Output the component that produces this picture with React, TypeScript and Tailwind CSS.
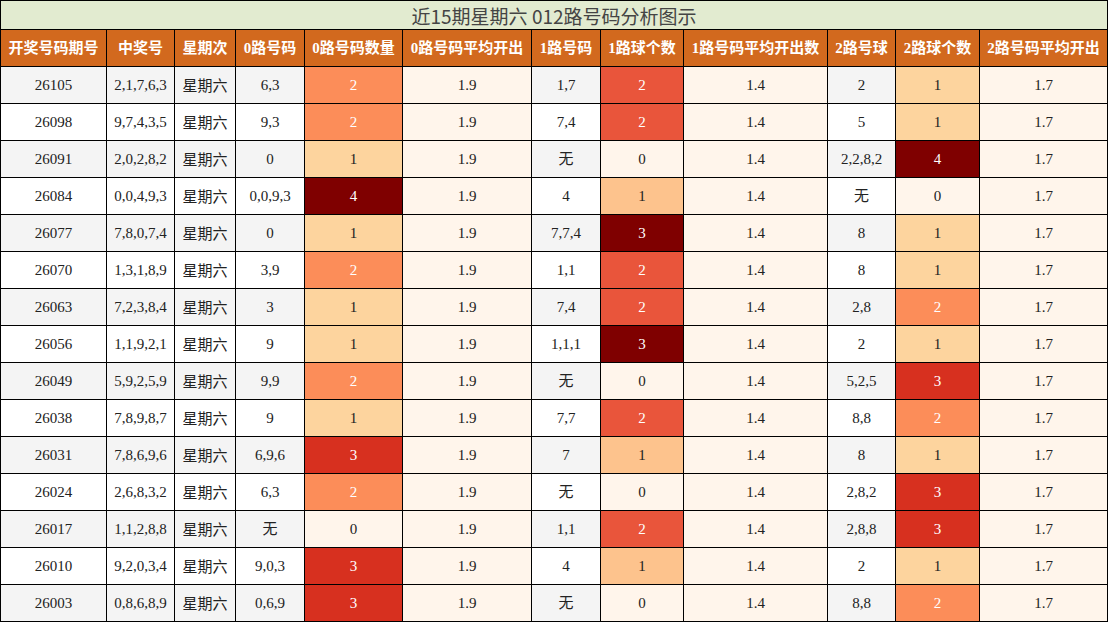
import React from 'react';

type Row = [string, string, string, number, string, number, string, number];

// 期号, 中奖号, 0路号码, 0路数量, 1路号码, 1路个数, 2路号球, 2路个数
const rows: Row[] = [
    ['26105', '2,1,7,6,3', '6,3', 2, '1,7', 2, '2', 1],
    ['26098', '9,7,4,3,5', '9,3', 2, '7,4', 2, '5', 1],
    ['26091', '2,0,2,8,2', '0', 1, '无', 0, '2,2,8,2', 4],
    ['26084', '0,0,4,9,3', '0,0,9,3', 4, '4', 1, '无', 0],
    ['26077', '7,8,0,7,4', '0', 1, '7,7,4', 3, '8', 1],
    ['26070', '1,3,1,8,9', '3,9', 2, '1,1', 2, '8', 1],
    ['26063', '7,2,3,8,4', '3', 1, '7,4', 2, '2,8', 2],
    ['26056', '1,1,9,2,1', '9', 1, '1,1,1', 3, '2', 1],
    ['26049', '5,9,2,5,9', '9,9', 2, '无', 0, '5,2,5', 3],
    ['26038', '7,8,9,8,7', '9', 1, '7,7', 2, '8,8', 2],
    ['26031', '7,8,6,9,6', '6,9,6', 3, '7', 1, '8', 1],
    ['26024', '2,6,8,3,2', '6,3', 2, '无', 0, '2,8,2', 3],
    ['26017', '1,1,2,8,8', '无', 0, '1,1', 2, '2,8,8', 3],
    ['26010', '9,2,0,3,4', '9,0,3', 3, '4', 1, '2', 1],
    ['26003', '0,8,6,8,9', '0,6,9', 3, '无', 0, '8,8', 2],
];

const headers = ['开奖号码期号', '中奖号', '星期次', '0路号码', '0路号码数量', '0路号码平均开出', '1路号码', '1路球个数', '1路号码平均开出数', '2路号球', '2路球个数', '2路号码平均开出'];
const widths = [106, 68, 61, 69, 98, 129, 69, 83, 144, 68, 84, 128];

// scale for columns whose max is 4
const scale4: Record<number, string> = {
    0: 'bg-[#fff5eb] text-[#222]',
    1: 'bg-[#fdd49e] text-[#222]',
    2: 'bg-[#fc8d59] text-white',
    3: 'bg-[#d7301f] text-white',
    4: 'bg-[#7f0000] text-white',
};
// 1路 column tops out at 3
const scale3: Record<number, string> = {
    0: 'bg-[#fff5eb] text-[#222]',
    1: 'bg-[#fdc38d] text-[#222]',
    2: 'bg-[#e9553b] text-white',
    3: 'bg-[#7f0000] text-white',
};

const cell = 'border border-black text-center p-0 text-[15px]';

export default function App() {
    return (
        <div className="w-[1108px] h-[622px] overflow-hidden bg-white" style={{ fontFamily: '"Liberation Serif", "Noto Sans CJK SC", serif' }}>
            <table className="table-fixed border-collapse w-[1108px] text-[#222]">
                <colgroup>
                    {widths.map((w, i) => (
                        <col key={i} style={{ width: w }} />
                    ))}
                </colgroup>
                <tbody>
                    <tr className="h-[29px]">
                        <td
                            colSpan={12}
                            className="border border-black bg-[#e2ebd0] text-center text-[19px] text-[#444] p-0 leading-none"
                            style={{ fontFamily: '"Noto Sans CJK SC", sans-serif' }}
                        >
                            近15期星期六 012路号码分析图示
                        </td>
                    </tr>
                    <tr className="h-[37px] bg-[#d2691e]">
                        {headers.map(h => (
                            <th key={h} className={`${cell} text-white font-bold whitespace-nowrap`}>
                                {h}
                            </th>
                        ))}
                    </tr>
                    {rows.map((r, i) => {
                        const bg = i % 2 === 0 ? 'bg-[#f4f4f4]' : 'bg-white';
                        return (
                            <tr key={r[0]} className={`h-[37px] ${bg}`}>
                                <td className={cell}>{r[0]}</td>
                                <td className={cell}>{r[1]}</td>
                                <td className={cell} style={{ fontFamily: '"Noto Sans CJK SC", sans-serif' }}>星期六</td>
                                <td className={cell}>{r[2]}</td>
                                <td className={`${cell} ${scale4[r[3]]}`}>{r[3]}</td>
                                <td className={`${cell} bg-[#fff5eb]`}>1.9</td>
                                <td className={cell}>{r[4]}</td>
                                <td className={`${cell} ${scale3[r[5]]}`}>{r[5]}</td>
                                <td className={`${cell} bg-[#fff5eb]`}>1.4</td>
                                <td className={cell}>{r[6]}</td>
                                <td className={`${cell} ${scale4[r[7]]}`}>{r[7]}</td>
                                <td className={`${cell} bg-[#fff5eb]`}>1.7</td>
                            </tr>
                        );
                    })}
                </tbody>
            </table>
        </div>
    );
}
